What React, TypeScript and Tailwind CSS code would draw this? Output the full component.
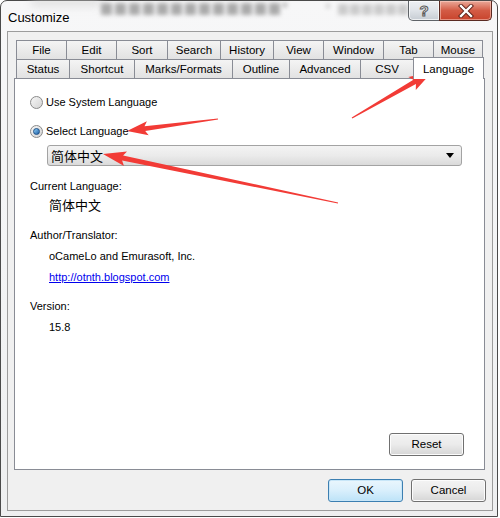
import React from "react";

const font = { fontFamily: '"Liberation Sans", Arial, sans-serif' };
const cjk = { fontFamily: '"Noto Sans CJK SC", "Noto Sans", sans-serif' };

type Pt = [number, number];
function arrowPoints(tail: Pt, tip: Pt, headLen = 18, headW = 14, tailW = 1.5, neckW = 5): string {
  const dx = tip[0] - tail[0];
  const dy = tip[1] - tail[1];
  const len = Math.hypot(dx, dy);
  const ux = dx / len;
  const uy = dy / len;
  const px = -uy;
  const py = ux;
  const nx = tip[0] - ux * headLen;
  const ny = tip[1] - uy * headLen;
  const bx = tip[0] - ux * (headLen + 3);
  const by = tip[1] - uy * (headLen + 3);
  const pts: Pt[] = [
    [tail[0] + (px * tailW) / 2, tail[1] + (py * tailW) / 2],
    [nx + (px * neckW) / 2, ny + (py * neckW) / 2],
    [bx + (px * headW) / 2, by + (py * headW) / 2],
    tip,
    [bx - (px * headW) / 2, by - (py * headW) / 2],
    [nx - (px * neckW) / 2, ny - (py * neckW) / 2],
    [tail[0] - (px * tailW) / 2, tail[1] - (py * tailW) / 2],
  ];
  return pts.map((p) => `${p[0].toFixed(1)},${p[1].toFixed(1)}`).join(" ");
}

const row1 = [
  { t: "File", w: 51 },
  { t: "Edit", w: 51 },
  { t: "Sort", w: 52 },
  { t: "Search", w: 54 },
  { t: "History", w: 54 },
  { t: "View", w: 51 },
  { t: "Window", w: 61 },
  { t: "Tab", w: 51 },
  { t: "Mouse", w: 50 },
];
const row2 = [
  { t: "Status", w: 54 },
  { t: "Shortcut", w: 66 },
  { t: "Marks/Formats", w: 99 },
  { t: "Outline", w: 58 },
  { t: "Advanced", w: 72 },
  { t: "CSV", w: 54 },
];

const blobsA = [0, 1, 2, 3, 4, 5, 6, 7, 8, 9, 10, 11, 12];
const blobsB = [0, 1, 2, 3, 4, 5];

function Tab({ t, w, first }: { t: string; w: number; first: boolean }) {
  return (
    <div
      className={`${first ? "" : "-ml-px"} h-[19px] pt-[2px] flex items-center justify-center border border-b-0 border-[#898c95] bg-gradient-to-b from-[#f4f4f4] to-[#e2e2e2] text-[11.5px] text-black`}
      style={{ width: w }}
    >
      {t}
    </div>
  );
}

function Radio({ checked }: { checked: boolean }) {
  return (
    <div className="w-[13px] h-[13px] rounded-full border border-[#8a8a8a] bg-gradient-to-br from-[#f6f6f6] to-[#d4d4d4] flex items-center justify-center shrink-0">
      {checked && (
        <div className="w-[7px] h-[7px] rounded-full border border-[#1c4f86] bg-gradient-to-br from-[#8fd0f6] to-[#1b5ea6]" />
      )}
    </div>
  );
}

function Btn({ label, def }: { label: string; def?: boolean }) {
  return (
    <div
      className={`w-[75px] h-[23px] rounded-[3px] border flex items-center justify-center text-[11.5px] text-black ${
        def
          ? "border-[#3c7fb1] bg-gradient-to-b from-[#eaf6fd] via-[#d9effc] to-[#bde3f8] shadow-[inset_0_0_0_1px_#c8e6f8]"
          : "border-[#707070] bg-gradient-to-b from-[#f3f3f3] via-[#ebebeb] to-[#d6d6d6] shadow-[inset_0_0_0_1px_#fcfcfc]"
      }`}
    >
      {label}
    </div>
  );
}

export default function App() {
  return (
    <div className="w-[500px] h-[518px] bg-white relative overflow-hidden" style={font}>
      <div className="w-[498px] h-[517px] border border-[#4a4a4a] rounded-t-[7px] bg-gradient-to-b from-[#f7f7f8] via-[#f3f4f5] to-[#eeeff0] flex flex-col relative">
        {/* title bar */}
        <div className="h-[30px] flex items-start relative">
          <div className="absolute left-[30px] top-[-3px] w-[70px] h-[8px] bg-[#cfcfcf] blur-[4px] opacity-60" />
          <div className="absolute left-[100px] top-[2px] flex gap-[3px] blur-[2px] opacity-70">
            {blobsA.map((i) => (
              <div key={i} className="w-[11px] h-[12px] bg-[#8a8a8a]" />
            ))}
            <div className="w-[4px] h-[4px] bg-[#8a8a8a]" />
          </div>
          <div className="absolute left-[325px] top-[3px] flex gap-[2px] blur-[2px] opacity-40">
            <div className="w-[4px] h-[4px] bg-[#8a8a8a] mr-[6px]" />
            {blobsB.map((i) => (
              <div key={i} className="w-[10px] h-[11px] bg-[#8a8a8a]" />
            ))}
          </div>
          <div className="pl-[7px] pt-[7px] text-[13px] text-black relative">Customize</div>
          <div className="ml-auto mr-[5px] flex relative">
            <div className="w-[32px] h-[20px] rounded-bl-[5px] border border-t-0 border-[#5f6368] bg-gradient-to-b from-[#eef0f3] via-[#dfe3e8] to-[#c6ccd3] flex items-center justify-center shadow-[inset_0_0_0_1px_rgba(255,255,255,0.7)]">
              <span className="text-[15px] font-bold text-white leading-none [-webkit-text-stroke:1px_#5a5a5a]">?</span>
            </div>
            <div className="-ml-px w-[53px] h-[20px] rounded-br-[5px] border border-t-0 border-[#5a2a22] bg-gradient-to-b from-[#e9a899] via-[#d35b45] to-[#c8432c] flex items-center justify-center shadow-[inset_0_0_0_1px_rgba(255,220,210,0.5)]">
              <svg width="16" height="14" viewBox="0 0 16 14">
                <path d="M3 2 L13 12 M13 2 L3 12" stroke="#5b1f16" strokeWidth="4.2" strokeLinecap="square" />
                <path d="M3 2 L13 12 M13 2 L3 12" stroke="#ffffff" strokeWidth="2.4" strokeLinecap="square" />
              </svg>
            </div>
          </div>
        </div>

        {/* client area */}
        <div className="ml-[6px] w-[486px] h-[480px] border border-[#9c9c9c] bg-[#f0f0f0] flex flex-col">
          <div className="ml-[6px] mt-[8px] w-[471px] flex flex-col">
            <div className="ml-[2px] flex h-[19px]">
              {row1.map((r, i) => (
                <Tab key={r.t} t={r.t} w={r.w} first={i === 0} />
              ))}
            </div>
            <div className="ml-[2px] flex items-end h-[19px]">
              {row2.map((r, i) => (
                <Tab key={r.t} t={r.t} w={r.w} first={i === 0} />
              ))}
              <div className="-ml-px w-[71px] h-[22px] mb-[-1px] relative z-10 border border-b-0 border-[#898c95] bg-white flex items-start justify-center pt-[3px] text-[11.5px] text-black">
                Language
              </div>
            </div>
            <div className="w-[471px] h-[392px] border border-[#898c95] bg-white flex flex-col text-[11px] text-black">
              <div className="mt-[16px] ml-[15px] flex items-center h-[14px] gap-[3px]">
                <Radio checked={false} />
                <span>Use System Language</span>
              </div>
              <div className="mt-[15px] ml-[15px] flex items-center h-[14px] gap-[3px]">
                <Radio checked={true} />
                <span>Select Language</span>
              </div>
              <div className="mt-[7px] ml-[32px] w-[415px] h-[21px] rounded-[3px] border border-[#a3a3a3] bg-gradient-to-b from-[#f3f3f3] via-[#ebebeb] to-[#dadada] flex items-center pl-[3px] pr-[7px]">
                <span className="text-[13px] leading-none" style={cjk}>简体中文</span>
                <div className="ml-auto w-0 h-0 border-l-[4px] border-r-[4px] border-t-[5px] border-l-transparent border-r-transparent border-t-black" />
              </div>
              <div className="mt-[13px] ml-[15px] h-[14px] leading-[14px]">Current Language:</div>
              <div className="mt-[4px] ml-[34px] h-[16px] leading-[16px] text-[13px]" style={cjk}>简体中文</div>
              <div className="mt-[15px] ml-[15px] h-[14px] leading-[14px]">Author/Translator:</div>
              <div className="mt-[7px] ml-[34px] h-[14px] leading-[14px]">oCameLo and Emurasoft, Inc.</div>
              <div className="mt-[7px] ml-[34px] h-[14px] leading-[14px] text-[#0000ee] underline">http://otnth.blogspot.com</div>
              <div className="mt-[15px] ml-[15px] h-[14px] leading-[14px]">Version:</div>
              <div className="mt-[7px] ml-[34px] h-[14px] leading-[14px]">15.8</div>
              <div className="mt-auto mb-[13px] mr-[20px] self-end">
                <Btn label="Reset" />
              </div>
            </div>
          </div>
          <div className="mt-[9px] mr-[6px] self-end flex gap-[8px]">
            <Btn label="OK" def />
            <Btn label="Cancel" />
          </div>
        </div>
      </div>

      {/* annotation arrows */}
      <svg className="absolute left-0 top-0 pointer-events-none" width="500" height="518">
        <polygon points={arrowPoints([352, 118], [432, 72], 20, 15, 1.2, 5)} fill="#f23b36" />
        <polygon points={arrowPoints([218, 119], [127, 131], 18, 14, 1.2, 5)} fill="#f23b36" />
        <polygon points={arrowPoints([338, 203], [103, 154], 20, 15, 1.2, 5)} fill="#f23b36" />
      </svg>
    </div>
  );
}
